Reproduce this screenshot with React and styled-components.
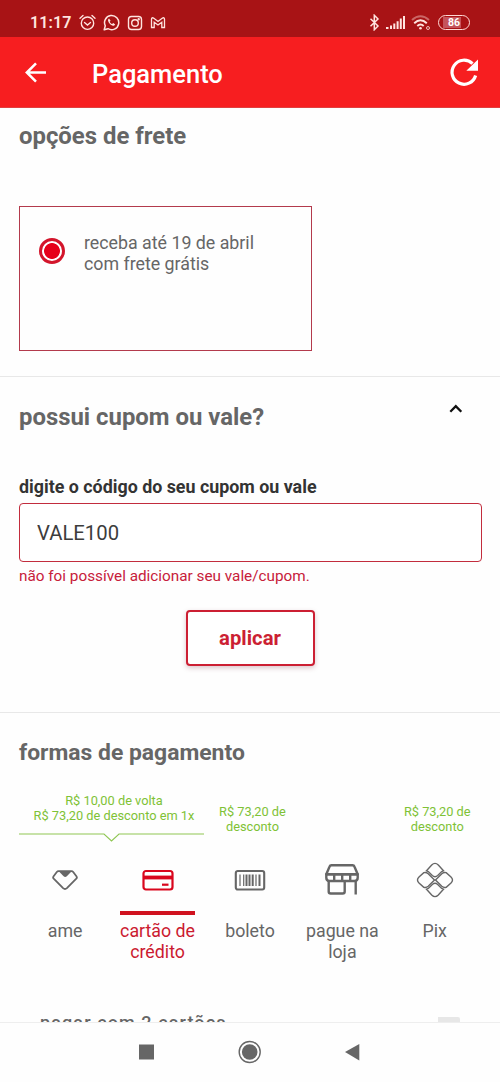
import React, { useState } from 'react';
import styled, { createGlobalStyle, css } from 'styled-components';

const GlobalStyle = createGlobalStyle`
  * {
    box-sizing: border-box;
  }

  body {
    margin: 0;
    background: #fefefe;
    font-family: Roboto, 'Liberation Sans', sans-serif;
  }
`;

const Screen = styled.div`
  width: 500px;
  height: 1082px;
  display: flex;
  flex-direction: column;
  overflow: hidden;
  color: #666;
`;

const StatusBar = styled.div`
  flex: none;
  display: flex;
  align-items: center;
  height: 37px;
  padding: 8px 30px 0 30px;
  background: #a81315;
  color: #ffe4df;

  svg {
    display: block;
    flex: none;
  }
`;

const Clock = styled.span`
  width: 49px;
  font-size: 16px;
  font-weight: 600;
  letter-spacing: 0.1px;
  line-height: 20px;
`;

const StatusGroup = styled.div`
  display: flex;
  align-items: center;
  gap: ${({ $gap }) => $gap}px;
`;

const Spacer = styled.div`
  flex: 1;
`;

const Battery = styled.div`
  display: flex;
  align-items: center;
  justify-content: center;
  width: 32px;
  height: 15px;
  margin-left: 1px;
  border: 1.5px solid #ffd9d5;
  border-radius: 8px;
  background: linear-gradient(90deg, #c4545b 80%, #a81315 80%) center / 22px 11px
    no-repeat;
  color: #fff;
  font-size: 10.5px;
  font-weight: 700;
  line-height: 11px;
`;

const Header = styled.header`
  flex: none;
  display: flex;
  align-items: center;
  height: 71px;
  padding: 0 19px 0 22px;
  border-bottom: 1px solid #e04040;
  background: #f71e20;
  color: #fff;
`;

const IconButton = styled.button`
  display: flex;
  padding: 0;
  border: none;
  background: none;
  color: inherit;
  cursor: pointer;
`;

const HeaderTitle = styled.h1`
  flex: 1;
  margin: 3px 0 0 42px;
  font-size: 25.5px;
  font-weight: 500;
  line-height: 30px;
`;

const Content = styled.main`
  flex: 1;
  min-height: 0;
  overflow: hidden;
`;

const Section = styled.section`
  height: ${({ $height }) => $height};
  padding: ${({ $top }) => $top}px 19px 0;
  border-bottom: 1px solid #e8e8e8;
`;

const SectionHead = styled.div`
  display: flex;
  justify-content: space-between;
  height: 30px;
  padding-right: 18px;
`;

const SectionTitle = styled.h2`
  margin: 0;
  color: #666;
  font-size: ${({ $size }) => $size || 23.9}px;
  font-weight: 700;
  line-height: 30px;
  white-space: nowrap;
`;

const ShippingCard = styled.label`
  display: flex;
  gap: 19px;
  width: 293px;
  height: 145px;
  margin-top: 55px;
  padding: 25px 19px;
  border: 1px solid #b33a4c;
  font-size: 17.8px;
  line-height: 21px;
`;

const Radio = styled.span`
  flex: none;
  width: 26px;
  height: 26px;
  margin-top: 6px;
  border: 3px solid #d3152b;
  border-radius: 50%;
  background: radial-gradient(circle, #e6001a 7.5px, #fff 8.3px);
`;

const FieldLabel = styled.label`
  display: block;
  margin-top: 44px;
  color: #333;
  font-size: 17.85px;
  font-weight: 700;
  line-height: 22px;
`;

const CouponInput = styled.input`
  display: block;
  width: 463px;
  height: 59px;
  margin-top: 5px;
  padding: 1px 17px 0;
  border: 1px solid #c22c3d;
  border-radius: 4px;
  outline: none;
  background: #fff;
  color: #3c3c3c;
  font-family: inherit;
  font-size: 20.3px;
`;

const ErrorText = styled.p`
  margin: 4px 0 0;
  color: #c7203a;
  font-size: 15.3px;
  line-height: 20px;
`;

const ApplyButton = styled.button`
  display: block;
  width: 129px;
  height: 56px;
  margin: 24px auto 0 167px;
  padding: 0 1px 0 0;
  border: 2px solid #cc1f33;
  border-radius: 4px;
  background: #fff;
  box-shadow: 0 2px 5px rgba(120, 30, 50, 0.25);
  color: #cc1f33;
  font-family: inherit;
  font-size: 20.3px;
  font-weight: 700;
  cursor: pointer;
`;

const Discounts = styled.div`
  display: grid;
  grid-template-columns: repeat(5, 92.4px);
  align-items: center;
  height: 51px;
  margin-top: 24px;
  color: #7ec236;
  font-size: 12.8px;
  line-height: 15px;
  text-align: center;
`;

const Discount = styled.div`
  grid-column: ${({ $column }) => $column};
  padding: 2px 6px 0 11px;
`;

const Callout = styled.div`
  grid-column: 1 / span 2;
  align-self: start;
  width: 185px;
  white-space: nowrap;

  p {
    margin: 0;
    padding: 1px 0 10px 5px;
  }

  svg {
    display: block;
  }
`;

const Tabs = styled.div`
  display: grid;
  grid-template-columns: repeat(5, 92.4px);
  margin-top: 10px;
`;

const activeTab = css`
  color: #cb1a30;

  &::after {
    background: #d0121f;
  }
`;

const Tab = styled.button`
  display: grid;
  grid-template-rows: 58px 4px 1fr;
  justify-items: center;
  padding: 0;
  border: none;
  background: none;
  color: #666;
  font-family: inherit;
  font-size: 17.8px;
  line-height: 21px;
  cursor: pointer;

  /* selection bar between icon and label */
  &::after {
    content: '';
    grid-row: 2;
    width: 75px;
    height: 4px;
  }

  ${({ $active }) => $active && activeTab}
`;

const TabIcon = styled.span`
  grid-row: 1;
  display: flex;
  align-items: center;
  height: 54px;
`;

const TabLabel = styled.span`
  grid-row: 3;
  max-width: 80px;
  padding-top: 5px;
`;

const SplitRow = styled.div`
  display: flex;
  justify-content: space-between;
  margin-top: 49px;
  padding: 0 21px;
  font-size: 18px;
  font-weight: 500;
  line-height: 24px;
  letter-spacing: 1.1px;
`;

const Toggle = styled.span`
  display: block;
  width: 42px;
  height: 20px;
  margin-top: 6px;
  border-radius: 2px;
  background: linear-gradient(90deg, #fefefe 48%, #e7e7e7 48%);
`;

const NavBar = styled.nav`
  flex: none;
  display: flex;
  height: 60px;
  padding-left: 138px;
  border-top: 1px solid #eee;
  color: #666;
`;

const AlarmIcon = () => (
  <svg width="17" height="17" viewBox="0 0 17 17" fill="none" stroke="currentColor" strokeWidth="1.4">
    <circle cx="8.5" cy="9.2" r="6.2" />
    <path d="M1 4.2 4 1.5M16 4.2 13 1.5M5.5 8.5l3 2.5 3-2.5" strokeLinecap="round" />
  </svg>
);

const WhatsappIcon = () => (
  <svg width="17" height="17" viewBox="0 0 17 17" fill="none" stroke="currentColor" strokeWidth="1.5">
    <path d="M1.2 15.8l1.1-4A7.1 7.1 0 1 1 5 14.7z" strokeLinejoin="round" />
    <path
      d="M6 4.5 5 5.7c-.2 2.8 3.3 6.2 6 6.1l1.2-1.2-1.9-1.5-1.2.9C8 9.6 7 8.5 6.7 7.7l.9-1z"
      fill="currentColor"
      stroke="none"
    />
  </svg>
);

const InstagramIcon = () => (
  <svg width="16" height="16" viewBox="0 0 16 16" fill="none" stroke="currentColor" strokeWidth="1.4">
    <rect x="1.5" y="1.5" width="13" height="13" rx="3" />
    <circle cx="8" cy="8" r="3.3" />
    <circle cx="11.7" cy="4.3" r=".5" fill="currentColor" />
  </svg>
);

const GmailIcon = () => (
  <svg width="16" height="14" viewBox="0 0 16 14" fill="none" stroke="currentColor" strokeWidth="1.3">
    <path d="M1.5 11.5V3.2c0-1.5 1-1.8 2-1.1L8 5.5l4.5-3.4c1-.7 2-.4 2 1.1v8.300h-2.700V6.200L8 9 4.200 6.200v5.300z" />
  </svg>
);

const BluetoothIcon = () => (
  <svg width="11" height="17" viewBox="0 0 11 17" fill="none" stroke="currentColor" strokeWidth="1.5">
    <path d="M1.5 4.7 9 12l-3.700 3.700V1.300L9 5l-7.500 7.300" />
  </svg>
);

const SignalIcon = () => (
  <svg width="19" height="15" viewBox="0 0 19 15" fill="currentColor">
    <path d="M0 12h2.500v2H0zM4 10.500h2V14H4zM7.300 8.500h2V14h-2zM10.600 6.200h2V14h-2zM13.800 3.600h2V14h-2zM17 1h2v13h-2z" />
  </svg>
);

const WifiIcon = () => (
  <svg width="20" height="17" viewBox="0 0 20 17" fill="none" stroke="currentColor" strokeWidth="1.9">
    <path d="M1 6q8.500-7.500 17 0" opacity=".4" />
    <path d="M3.200 9.200q6.300-6 12.600 0M6.300 12q3.200-3 6.400 0" />
    <circle cx="9.500" cy="14.300" r="1.300" fill="currentColor" stroke="none" />
    <circle cx="17" cy="14" r="1.500" strokeWidth="1" opacity=".8" />
  </svg>
);

const BackIcon = () => (
  <svg width="28" height="28" viewBox="0 0 28 28" fill="none" stroke="currentColor" strokeWidth="2.5">
    <path d="M24 14.500H5M14 5.300 4.800 14.500l9.200 9.200" />
  </svg>
);

const RefreshIcon = () => (
  <svg width="32" height="32" viewBox="0 0 32 32">
    <path
      d="M26.600 19.500A12 12 0 1 1 23.500 7.700"
      fill="none"
      stroke="currentColor"
      strokeWidth="3.2"
    />
    <path d="M29 3.500v11.300H17.300z" fill="currentColor" />
  </svg>
);

const ChevronIcon = () => (
  <svg width="15" height="12" viewBox="0 0 15 12" fill="none" stroke="#111" strokeWidth="2.3">
    <path d="M2.300 9.700l5.500-5.500 5.500 5.500" />
  </svg>
);

const AmeIcon = () => (
  <svg width="28" height="22" viewBox="0 0 28 22" fill="none" stroke="currentColor" strokeWidth="1.8">
    <path
      d="M7.500 2.200h13q1 0 1.700.8l3.200 4.200q1 1.300-.1 2.500l-9.400 9.400q-1.900 1.700-3.800 0L2.700 9.700Q1.600 8.500 2.600 7.200L5.800 3q.7-.8 1.700-.8z"
      strokeLinejoin="round"
    />
    <path d="M8 2.500h12.500l-4.700 4.700q-1.600 1.400-3.200 0z" fill="currentColor" stroke="none" />
  </svg>
);

const CardIcon = () => (
  <svg width="32" height="22" viewBox="0 0 32 22" fill="none" stroke="#d9061d" strokeWidth="2.2">
    <rect x="1.500" y="2" width="29" height="18.500" rx="2.500" />
    <path d="M2 8.500h28" strokeWidth="3.8" />
    <path d="M20 15.700h6.500" />
  </svg>
);

const BarcodeIcon = () => (
  <svg width="32" height="22" viewBox="0 0 32 22" fill="none" stroke="currentColor">
    <rect x="1.800" y="2" width="28.400" height="18.500" rx="2" strokeWidth="2.1" />
    <path d="M6 5.500v11.500M9.700 5.500v11.500M22 5.500v11.500" strokeWidth="1.2" />
    <path d="M12.500 5.500v11.500M15.500 5.500v11.500M18.700 5.500v11.500M25.500 5.500v11.500" strokeWidth="2" />
  </svg>
);

const StoreIcon = () => (
  <svg width="36" height="34" viewBox="0 0 36 34" fill="none" stroke="currentColor" strokeWidth="2.4" strokeLinejoin="round">
    <path d="M2.300 11.200 5.500 3.700q.5-1.500 2-1.500h21q1.500 0 2 1.500l3.200 7.500z" />
    <path d="M2.300 11.200h31.400v3.600q0 3.200-3.200 3.200h-25q-3.200 0-3.200-3.200zM10.200 11.200V18M18.200 11.200V18M26.200 11.200V18" />
    <path d="M4.700 18v10.500q0 2 2 2h12q2 0 2-2V18M31.700 18v13.500" />
  </svg>
);

const PixIcon = () => (
  <svg width="38" height="38" viewBox="0 0 38 38" fill="none" stroke="currentColor" strokeWidth="1.4">
    <path d="M10.500 9.800 15.700 4q3.300-3.300 6.600 0l5.200 5.800-1.800.7-4 4q-2.700 2.500-5.400 0l-4-4z" />
    <path d="M10.500 28.200 15.700 34q3.300 3.300 6.600 0l5.200-5.800-1.800-.7-4-4q-2.700-2.500-5.400 0l-4 4z" />
    <path d="M18.500 19 12.200 25.300q-2 1.700-4.400 1L3 22q-3-3 0-6l4.800-4.300q2.400-.7 4.400 1z" />
    <path d="M19.500 19l6.300 6.300q2 1.700 4.400 1L35 22q3-3 0-6l-4.800-4.300q-2.400-.7-4.400 1z" />
  </svg>
);

const NavIcons = () => (
  <svg width="224" height="59" viewBox="0 0 224 59" fill="currentColor">
    <rect x="1" y="21.500" width="15" height="15" />
    <circle cx="111.700" cy="29" r="7.800" />
    <circle cx="111.700" cy="29" r="10.500" fill="none" stroke="currentColor" strokeWidth="1.4" />
    <path d="M207 29 221.300 21v16.500z" />
  </svg>
);

const methods = [
  { id: 'ame', label: 'ame', Icon: AmeIcon },
  { id: 'card', label: 'cartão de crédito', Icon: CardIcon },
  { id: 'boleto', label: 'boleto', Icon: BarcodeIcon },
  { id: 'store', label: 'pague na loja', Icon: StoreIcon },
  { id: 'pix', label: 'Pix', Icon: PixIcon },
];

const App = () => {
  const [coupon, setCoupon] = useState('VALE100');
  const [method, setMethod] = useState('card');

  return (
    <Screen>
      <GlobalStyle />
      <StatusBar>
        <Clock>11:17</Clock>
        <StatusGroup $gap={7}>
          <AlarmIcon />
          <WhatsappIcon />
          <InstagramIcon />
          <GmailIcon />
        </StatusGroup>
        <Spacer />
        <StatusGroup $gap={6}>
          <BluetoothIcon />
          <SignalIcon />
          <WifiIcon />
          <Battery>86</Battery>
        </StatusGroup>
      </StatusBar>
      <Header>
        <IconButton>
          <BackIcon />
        </IconButton>
        <HeaderTitle>Pagamento</HeaderTitle>
        <IconButton>
          <RefreshIcon />
        </IconButton>
      </Header>
      <Content>
        <Section $height="269px" $top={13}>
          <SectionTitle>opções de frete</SectionTitle>
          <ShippingCard>
            <Radio />
            <span>
              receba até 19 de abril
              <br />
              com frete grátis
            </span>
          </ShippingCard>
        </Section>
        <Section $height="336px" $top={25}>
          <SectionHead>
            <SectionTitle>possui cupom ou vale?</SectionTitle>
            <IconButton>
              <ChevronIcon />
            </IconButton>
          </SectionHead>
          <FieldLabel htmlFor="coupon">digite o código do seu cupom ou vale</FieldLabel>
          <CouponInput
            id="coupon"
            value={coupon}
            onChange={(e) => setCoupon(e.target.value)}
          />
          <ErrorText>não foi possível adicionar seu vale/cupom.</ErrorText>
          <ApplyButton>aplicar</ApplyButton>
        </Section>
        <Section $height="auto" $top={25}>
          <SectionTitle $size={22.9}>formas de pagamento</SectionTitle>
          <Discounts>
            <Callout>
              <p>
                R$ 10,00 de volta
                <br />
                R$ 73,20 de desconto em 1x
              </p>
              <svg width="185" height="9" fill="none" stroke="#8fc653" strokeWidth="1.1">
                <path d="M0 1h85l7.500 7 7.500-7h85" />
              </svg>
            </Callout>
            <Discount $column={3}>R$ 73,20 de desconto</Discount>
            <Discount $column={5}>R$ 73,20 de desconto</Discount>
          </Discounts>
          <Tabs>
            {methods.map(({ id, label, Icon }) => (
              <Tab key={id} $active={id === method} onClick={() => setMethod(id)}>
                <TabIcon>
                  <Icon />
                </TabIcon>
                <TabLabel>{label}</TabLabel>
              </Tab>
            ))}
          </Tabs>
          <SplitRow>
            <span>pagar com 2 cartões</span>
            <Toggle />
          </SplitRow>
        </Section>
      </Content>
      <NavBar>
        <NavIcons />
      </NavBar>
    </Screen>
  );
};

export default App;
